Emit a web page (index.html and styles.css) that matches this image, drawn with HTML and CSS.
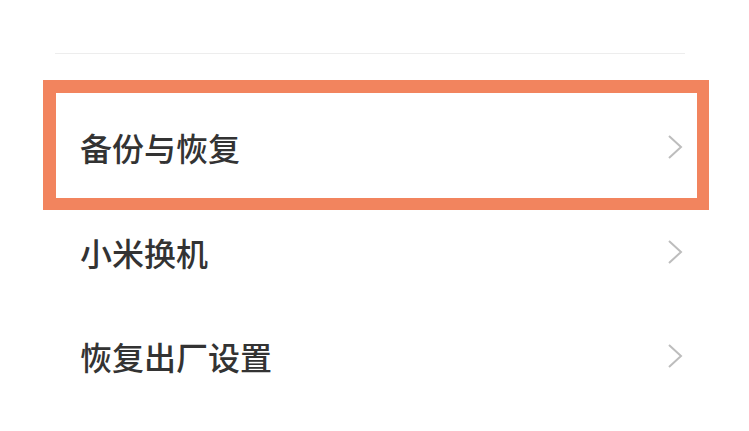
FILE: index.html
```html
<!DOCTYPE html>
<html lang="zh-CN">
<head>
    <meta charset="UTF-8">
    <meta name="viewport" content="width=device-width, initial-scale=1.0">
    <title>备份与恢复</title>
    <link rel="stylesheet" href="styles.css">
</head>
<body>
    <div class="settings">
        <div class="divider"></div>

        <!-- 高亮的选项 -->
        <div class="item item-highlight">
            <span class="item-title">备份与恢复</span>
            <svg class="arrow" width="16" height="26" viewBox="0 0 16 26"><polyline points="2,2 14,13 2,24" /></svg>
        </div>

        <div class="item item-first">
            <span class="item-title">小米换机</span>
            <svg class="arrow" width="16" height="26" viewBox="0 0 16 26"><polyline points="2,2 14,13 2,24" /></svg>
        </div>

        <div class="item">
            <span class="item-title">恢复出厂设置</span>
            <svg class="arrow" width="16" height="26" viewBox="0 0 16 26"><polyline points="2,2 14,13 2,24" /></svg>
        </div>
    </div>
</body>
</html>
```

FILE: styles.css
```css
body {
    margin: 0;
    padding: 0;
    background-color: #ffffff;
    font-family: "Noto Sans CJK SC", "Noto Sans", sans-serif;
    color: #333333;
}
.settings {
    width: 749px;
    height: 431px;
    padding: 53px 40px 0 43px;
    box-sizing: border-box;
    overflow: hidden;
}
.divider {
    height: 1px;
    background-color: #ededed;
    margin: 0 24px 26px 12px;
}
.item {
    display: flex;
    justify-content: space-between;
    align-items: center;
    height: 104px;
    padding: 0 26px 0 37px;
    box-sizing: border-box;
}
.item-title {
    font-size: 32px;
    font-weight: 500;
    line-height: 1;
}
.item-highlight {
    height: 130px;
    width: 666px;
    border: 13px solid #f2845e;
    border-bottom-width: 12px;
    border-right-width: 12px;
    padding: 2px 14px 0 24px;
}
.item-first {
    margin-top: -10px;
}
.arrow {
    fill: none;
    stroke: #bdbdbd;
    stroke-width: 2;
}
```
